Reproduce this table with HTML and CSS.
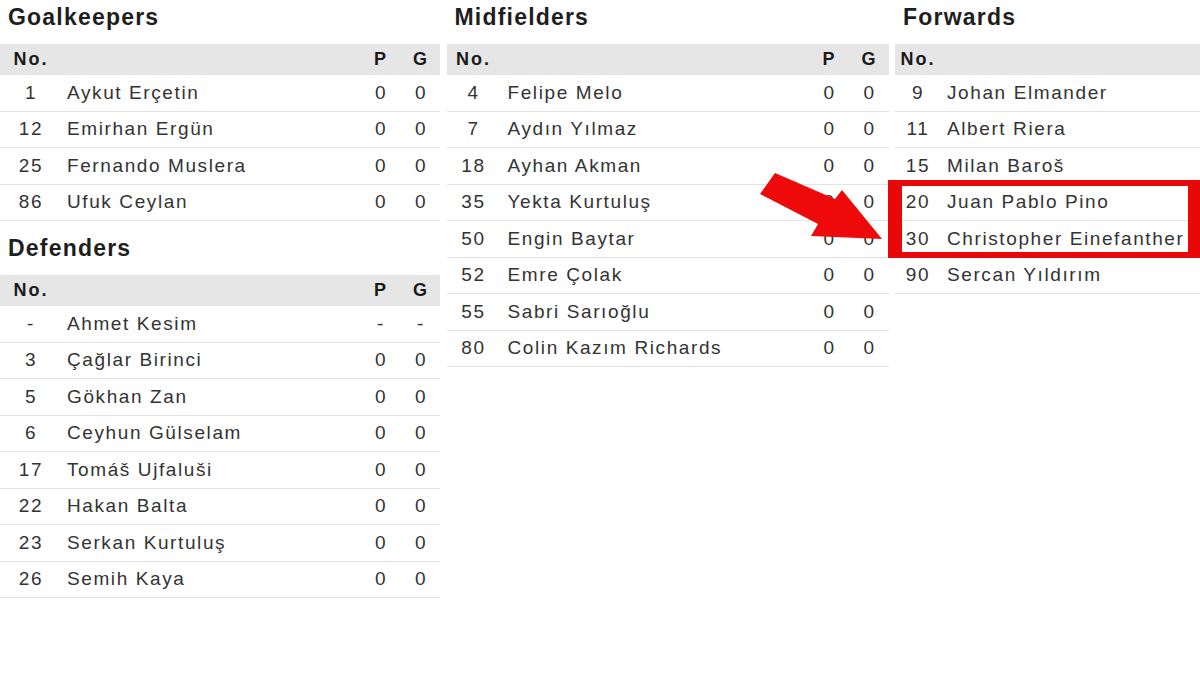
FILE: index.html
```html
<!DOCTYPE html>
<html lang="tr">
<head>
<meta charset="utf-8">
<title>Squad</title>
<link rel="stylesheet" href="styles.css">
</head>
<body>
<div class="page">
  <div class="col col-1">
    <section class="group">
      <h2 class="title">Goalkeepers</h2>
      <div class="table">
        <div class="row head"><span class="num">No.</span><span class="name"></span><span class="stat">P</span><span class="stat">G</span></div>
        <div class="row"><span class="num">1</span><span class="name">Aykut Erçetin</span><span class="stat">0</span><span class="stat">0</span></div>
        <div class="row"><span class="num">12</span><span class="name">Emirhan Ergün</span><span class="stat">0</span><span class="stat">0</span></div>
        <div class="row"><span class="num">25</span><span class="name">Fernando Muslera</span><span class="stat">0</span><span class="stat">0</span></div>
        <div class="row"><span class="num">86</span><span class="name">Ufuk Ceylan</span><span class="stat">0</span><span class="stat">0</span></div>
      </div>
    </section>
    <section class="group">
      <h2 class="title">Defenders</h2>
      <div class="table">
        <div class="row head"><span class="num">No.</span><span class="name"></span><span class="stat">P</span><span class="stat">G</span></div>
        <div class="row"><span class="num">-</span><span class="name">Ahmet Kesim</span><span class="stat">-</span><span class="stat">-</span></div>
        <div class="row"><span class="num">3</span><span class="name">Çağlar Birinci</span><span class="stat">0</span><span class="stat">0</span></div>
        <div class="row"><span class="num">5</span><span class="name">Gökhan Zan</span><span class="stat">0</span><span class="stat">0</span></div>
        <div class="row"><span class="num">6</span><span class="name">Ceyhun Gülselam</span><span class="stat">0</span><span class="stat">0</span></div>
        <div class="row"><span class="num">17</span><span class="name">Tomáš Ujfaluši</span><span class="stat">0</span><span class="stat">0</span></div>
        <div class="row"><span class="num">22</span><span class="name">Hakan Balta</span><span class="stat">0</span><span class="stat">0</span></div>
        <div class="row"><span class="num">23</span><span class="name">Serkan Kurtuluş</span><span class="stat">0</span><span class="stat">0</span></div>
        <div class="row"><span class="num">26</span><span class="name">Semih Kaya</span><span class="stat">0</span><span class="stat">0</span></div>
      </div>
    </section>
  </div>

  <div class="col col-2">
    <section class="group">
      <h2 class="title">Midfielders</h2>
      <div class="table">
        <div class="row head"><span class="num">No.</span><span class="name"></span><span class="stat">P</span><span class="stat">G</span></div>
        <div class="row"><span class="num">4</span><span class="name">Felipe Melo</span><span class="stat">0</span><span class="stat">0</span></div>
        <div class="row"><span class="num">7</span><span class="name">Aydın Yılmaz</span><span class="stat">0</span><span class="stat">0</span></div>
        <div class="row"><span class="num">18</span><span class="name">Ayhan Akman</span><span class="stat">0</span><span class="stat">0</span></div>
        <div class="row"><span class="num">35</span><span class="name">Yekta Kurtuluş</span><span class="stat">0</span><span class="stat">0</span></div>
        <div class="row"><span class="num">50</span><span class="name">Engin Baytar</span><span class="stat">0</span><span class="stat">0</span></div>
        <div class="row"><span class="num">52</span><span class="name">Emre Çolak</span><span class="stat">0</span><span class="stat">0</span></div>
        <div class="row"><span class="num">55</span><span class="name">Sabri Sarıoğlu</span><span class="stat">0</span><span class="stat">0</span></div>
        <div class="row"><span class="num">80</span><span class="name">Colin Kazım Richards</span><span class="stat">0</span><span class="stat">0</span></div>
      </div>
    </section>
  </div>

  <div class="col col-3">
    <section class="group">
      <h2 class="title">Forwards</h2>
      <div class="table">
        <div class="row head"><span class="num">No.</span><span class="name"></span></div>
        <div class="row"><span class="num">9</span><span class="name">Johan Elmander</span></div>
        <div class="row"><span class="num">11</span><span class="name">Albert Riera</span></div>
        <div class="row"><span class="num">15</span><span class="name">Milan Baroš</span></div>
        <div class="row"><span class="num">20</span><span class="name">Juan Pablo Pino</span></div>
        <div class="row"><span class="num">30</span><span class="name">Christopher Einefanther</span></div>
        <div class="row"><span class="num">90</span><span class="name">Sercan Yıldırım</span></div>
      </div>
    </section>
  </div>

  <div class="highlight"></div>
  <svg class="arrow" width="130" height="75" viewBox="0 0 130 75" aria-hidden="true">
    <polygon points="20,3 80,29 87,20 127,69 56,66 63,54 5,24" fill="#ee0a0a"/>
  </svg>
</div>
</body>
</html>
```

FILE: styles.css
```css
* {
  box-sizing: border-box;
}

html, body {
  margin: 0;
  padding: 0;
  background: #ffffff;
}

body {
  width: 1200px;
  height: 675px;
  overflow: hidden;
  font-family: "Liberation Sans", Arial, sans-serif;
  color: #333333;
}

.page {
  position: relative;
  width: 1200px;
  height: 675px;
  display: grid;
  grid-template-columns: 440px 442px 1fr;
  column-gap: 6.5px;
  align-items: start;
}

.col-1 { --num-w: 60px; --name-pad: 7px; --stats: 40px 40px; }
.col-2 { --num-w: 52px; --name-pad: 9px; --stats: 40px 40px; }
.col-3 { --num-w: 44px; --name-pad: 8px; --stats: ; }

.group + .group {
  margin-top: 10px;
}

.title {
  margin: 0;
  height: 44px;
  padding-left: 8px;
  font-size: 23px;
  line-height: 34px;
  font-weight: bold;
  letter-spacing: 1.2px;
  color: #1e1e1e;
}

.table {
  display: flex;
  flex-direction: column;
}

.row {
  display: grid;
  grid-template-columns: var(--num-w) 1fr var(--stats);
  align-items: center;
  height: 36.5px;
  border-bottom: 1px solid #e3e3e3;
  font-size: 19px;
  letter-spacing: 1.6px;
  white-space: nowrap;
}

.row.head {
  height: 31px;
  background: #e6e6e6;
  border-bottom: none;
  font-weight: bold;
  color: #1a1a1a;
  font-size: 18px;
  letter-spacing: 2px;
}

.num {
  text-align: center;
  padding-left: 2px;
}

.name {
  padding-left: var(--name-pad);
}

.stat {
  text-align: center;
  padding-left: 2px;
}

.highlight {
  position: absolute;
  left: 888px;
  top: 180px;
  width: 312px;
  height: 78px;
  border-style: solid;
  border-color: #e80808;
  border-width: 6px 12px 6px 14px;
}

.arrow {
  position: absolute;
  left: 755px;
  top: 170px;
}
```
